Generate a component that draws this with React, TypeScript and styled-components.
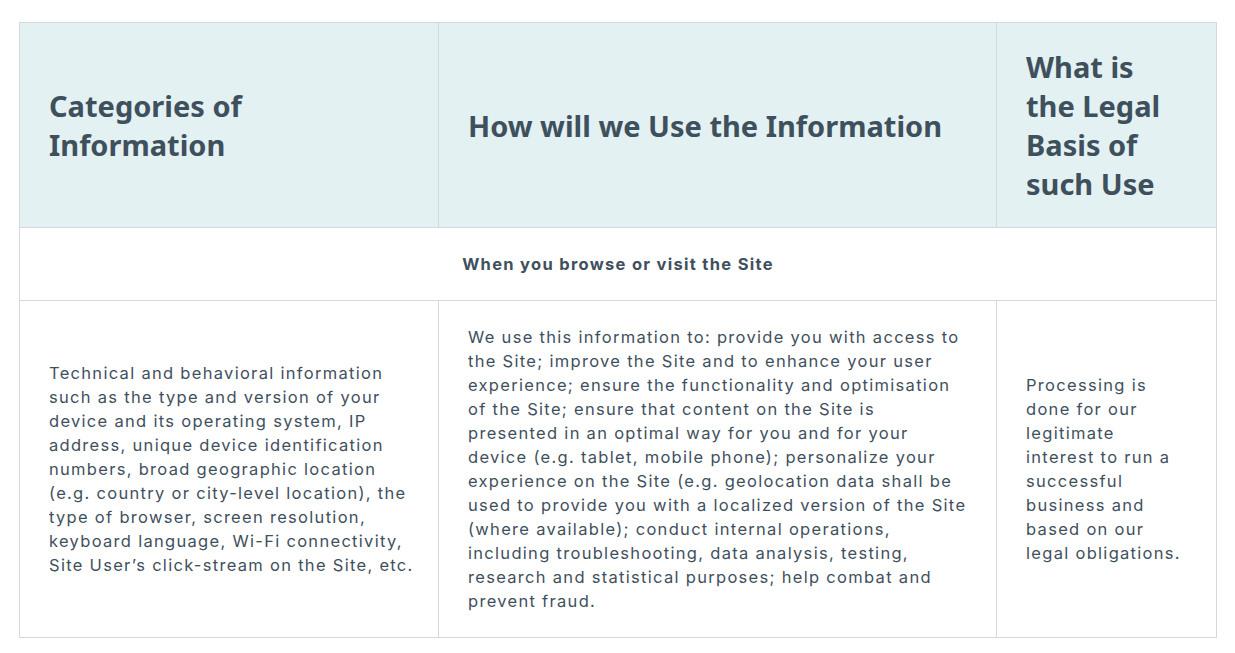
import React from "react";
import styled, { createGlobalStyle } from "styled-components";

const GlobalStyle = createGlobalStyle`
  html, body { margin: 0; padding: 0; background: #ffffff; }
  * { box-sizing: border-box; }
`;

const Page = styled.div`
  padding: 22px 19px;
`;

const Table = styled.table`
  width: 1197px;
  border-collapse: collapse;
  table-layout: fixed;
  color: #3f505d;
  font-family: Inter, "Liberation Sans", sans-serif;
`;

const HeadCell = styled.th`
  background: #e3f1f3;
  border: 1px solid #d3d8db;
  padding: 24px 29px;
  text-align: left;
  vertical-align: middle;
  font-family: "Noto Sans", "Open Sans", sans-serif;
  font-weight: 700;
  font-size: 29px;
  line-height: 39px;
  color: #3f505d;
`;

const SectionCell = styled.td`
  border: 1px solid #d3d8db;
  padding: 24px 29px;
  text-align: center;
  font-weight: 700;
  font-size: 16.5px;
  letter-spacing: 1.3px;
  line-height: 24px;
`;

const BodyCell = styled.td<{ $padRight?: number }>`
  border: 1px solid #d3d8db;
  padding: 24px ${(p) => p.$padRight ?? 29}px 24px 29px;
  vertical-align: middle;
  font-size: 16.5px;
  letter-spacing: 1.3px;
  line-height: 24px;
  font-weight: 400;
`;

const columns = [419, 558, 220];

export default function App() {
  return (
    <>
      <GlobalStyle />
      <Page>
        <Table>
          <colgroup>
            {columns.map((w, i) => (
              <col key={i} style={{ width: w }} />
            ))}
          </colgroup>
          <thead>
            <tr>
              <HeadCell>Categories of Information</HeadCell>
              <HeadCell>How will we Use the Information</HeadCell>
              <HeadCell>What is the Legal Basis of such Use</HeadCell>
            </tr>
          </thead>
          <tbody>
            <tr>
              <SectionCell colSpan={3}>When you browse or visit the Site</SectionCell>
            </tr>
            <tr>
              <BodyCell $padRight={20}>
                Technical and behavioral information such as the type and version of your
                device and its operating system, IP address, unique device identification
                numbers, broad geographic location (e.g. country or city-level location), the
                type of browser, screen resolution, keyboard language, Wi-Fi connectivity,
                Site User’s click-stream on the Site, etc.
              </BodyCell>
              <BodyCell>
                We use this information to: provide you with access to the Site; improve the
                Site and to enhance your user experience; ensure the functionality and
                optimisation of the Site; ensure that content on the Site is presented in an
                optimal way for you and for your device (e.g. tablet, mobile phone);
                personalize your experience on the Site (e.g. geolocation data shall be used
                to provide you with a localized version of the Site (where available); conduct
                internal operations, including troubleshooting, data analysis, testing,
                research and statistical purposes; help combat and prevent fraud.
              </BodyCell>
              <BodyCell>
                Processing is done for our legitimate interest to run a successful business
                and based on our legal obligations.
              </BodyCell>
            </tr>
          </tbody>
        </Table>
      </Page>
    </>
  );
}
